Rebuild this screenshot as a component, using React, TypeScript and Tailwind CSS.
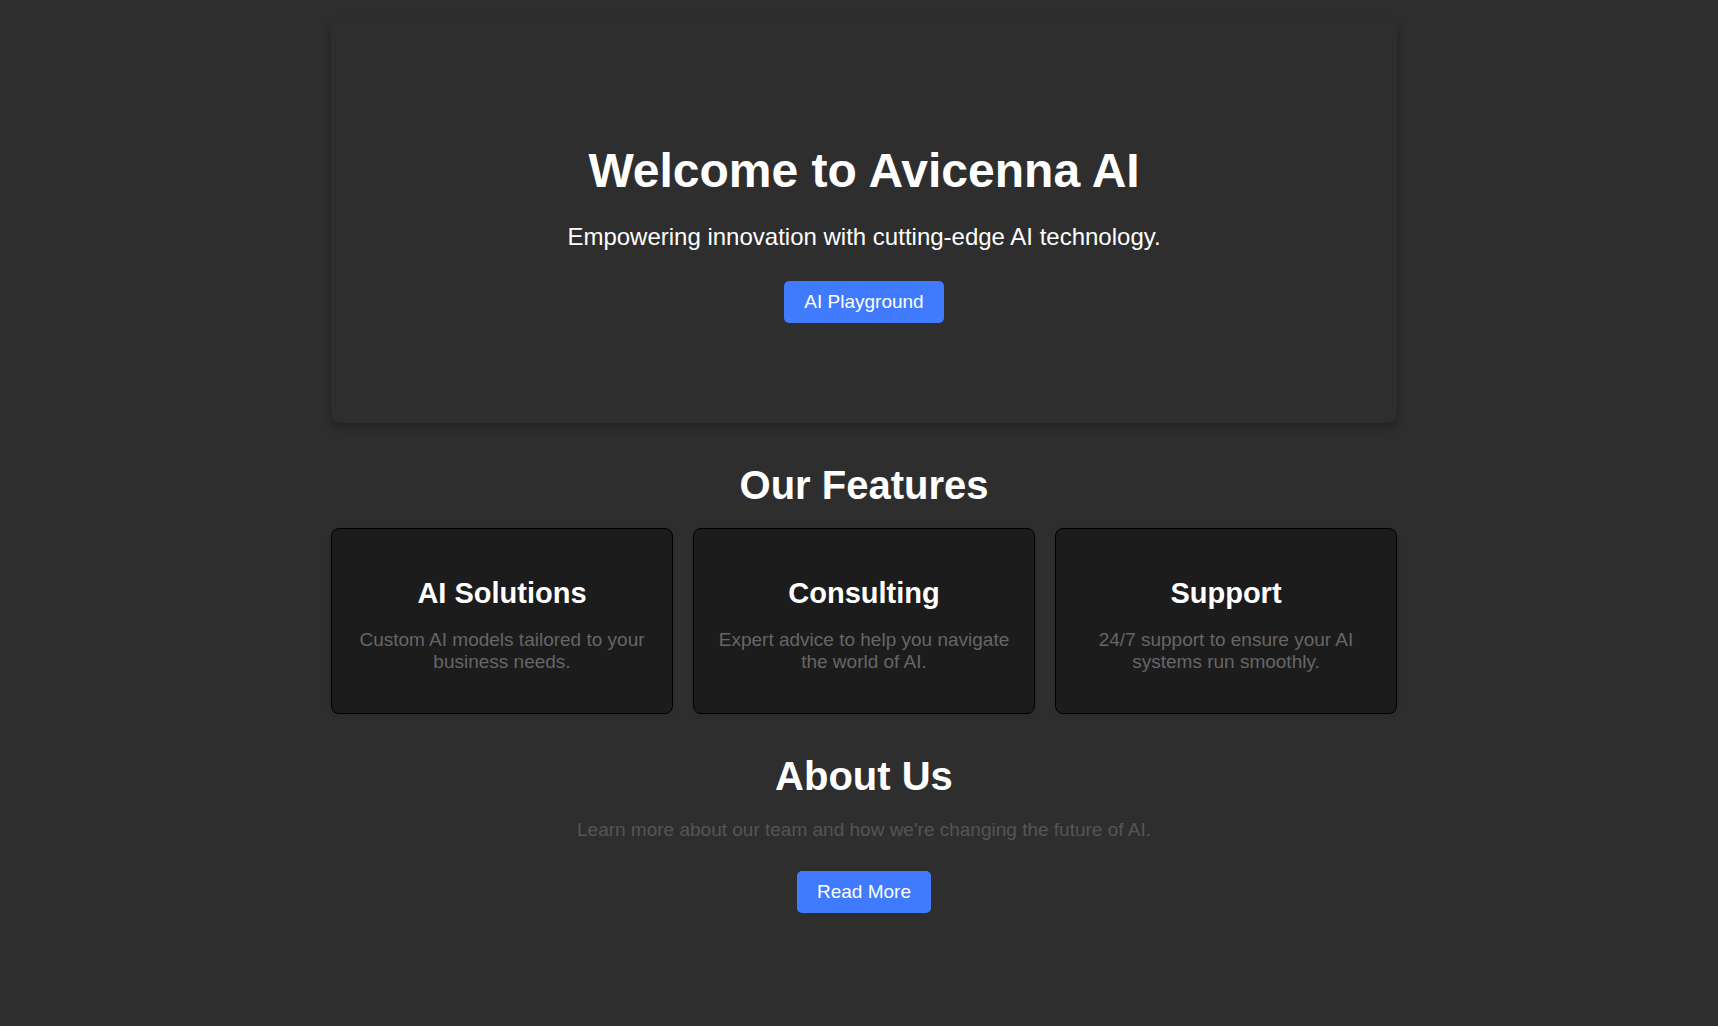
const features = [
  { title: "AI Solutions", text: "Custom AI models tailored to your business needs." },
  { title: "Consulting", text: "Expert advice to help you navigate the world of AI." },
  { title: "Support", text: "24/7 support to ensure your AI systems run smoothly." },
];

const buttonClass =
  "inline-block rounded-[5px] bg-[#407bff] px-5 py-[10px] text-[19px] leading-[22px] text-white";

export default function App() {
  return (
    <div className="min-h-screen bg-[#2e2e2e] py-5 pr-5 pl-[30px] font-['Liberation_Sans',Arial,sans-serif] text-white">
      <main className="mx-auto max-w-[1066px] text-center">
        <section className="rounded-[10px] px-5 py-[100px] shadow-[0_4px_8px_rgba(0,0,0,0.3)]">
          <h1 className="mt-6 text-5xl leading-[54px] font-bold">Welcome to Avicenna AI</h1>
          <p className="mt-[25px] mb-[30px] text-2xl leading-7">Empowering innovation with cutting-edge AI technology.</p>
          <a href="#playground" className={buttonClass}>AI Playground</a>
        </section>
        <section className="mt-10">
          <h2 className="text-[40px] leading-[45px] font-bold">Our Features</h2>
          <div className="mt-5 grid grid-cols-3 gap-5">
            {features.map((f) => (
              <article key={f.title} className="rounded-lg border border-black bg-[#1c1c1c] px-5 py-10 shadow-[0_2px_4px_rgba(0,0,0,0.1)]">
                <h3 className="mt-2 text-[29px] leading-8 font-bold">{f.title}</h3>
                <p className="mt-5 text-[19px] leading-[22px] text-[#666]">{f.text}</p>
              </article>
            ))}
          </div>
        </section>
        <section className="mt-10">
          <h2 className="text-[40px] leading-[45px] font-bold">About Us</h2>
          <p className="mt-5 mb-[30px] text-[19px] leading-[22px] text-[#555]">
            Learn more about our team and how we're changing the future of AI.
          </p>
          <a href="#about" className={buttonClass}>Read More</a>
        </section>
      </main>
    </div>
  );
}
